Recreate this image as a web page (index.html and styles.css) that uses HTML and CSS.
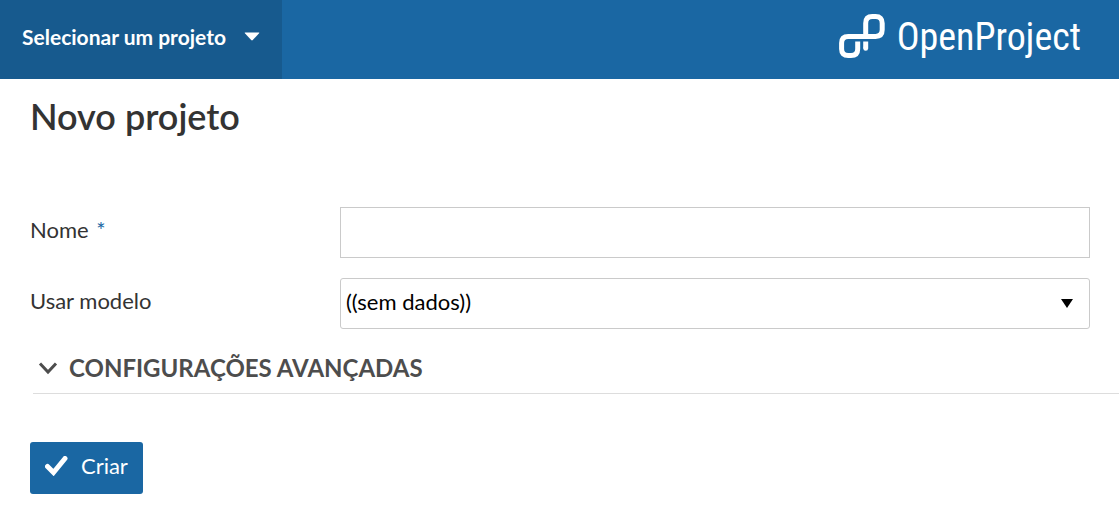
FILE: index.html
```html
<!DOCTYPE html>
<html lang="pt">
<head>
<meta charset="utf-8">
<meta name="viewport" content="width=device-width, initial-scale=1">
<title>Novo projeto - OpenProject</title>
<link rel="stylesheet" href="styles.css">
</head>
<body>
<header class="top-bar">
  <button class="project-menu" type="button">
    <span>Selecionar um projeto</span>
    <svg class="caret" viewBox="0 0 16 9" aria-hidden="true"><path d="M1.2 .5h13.6q1 0 .3.8L8.8 8q-.8.8-1.6 0L.9 1.3Q.2.5 1.2.5z"/></svg>
  </button>
  <a class="brand" href="#">
    <svg class="brand-mark" viewBox="0 0 46 45" aria-hidden="true">
      <path d="M18.7 27.5V35Q18.7 41.6 12 41.6H9.2Q2.6 41.6 2.6 35V29Q2.6 22.4 9.2 22.4H36.6Q43.2 22.4 43.2 15.8V9.2Q43.2 2.6 36.6 2.6H33.3Q26.7 2.6 26.7 9.2V22.4"/>
      <path d="M26.7 27.5V34.3" /><circle cx="26.7" cy="34.4" r="2.4"/>
    </svg>
    <span class="brand-name">OpenProject</span>
  </a>
</header>
<main class="content">
  <h1 class="title">Novo projeto</h1>
  <form class="form">
    <div class="field">
      <label class="label" for="name">Nome <span class="required">*</span></label>
      <input class="control" id="name" type="text" required>
    </div>
    <div class="field">
      <label class="label" for="template">Usar modelo</label>
      <div class="select-wrap">
        <select class="control select" id="template"><option>((sem dados))</option></select>
        <svg class="select-arrow" viewBox="0 0 12 9" aria-hidden="true"><path d="M0 0h12L6 9z"/></svg>
      </div>
    </div>
    <h2 class="section">
      <button class="section-toggle" type="button" aria-expanded="false">
        <svg class="chevron" viewBox="0 0 20 14" aria-hidden="true"><path d="M2 2.5l8 8.5 8-8.5"/></svg>
        <span>CONFIGURAÇÕES AVANÇADAS</span>
      </button>
    </h2>
    <button class="submit" type="submit">
      <svg class="check" viewBox="0 0 23 20" aria-hidden="true"><path d="M2.5 10.5l6 6L20 2.5"/></svg>
      <span>Criar</span>
    </button>
  </form>
</main>
</body>
</html>
```
FILE: styles.css
```css
* { box-sizing: border-box; }

body {
  margin: 0;
  background: #fff;
  color: #333;
  font: 22px/28px Lato, sans-serif;
}

button, input, select { font: inherit; }

.top-bar {
  display: flex;
  justify-content: space-between;
  height: 79px;
  background: #1a67a3;
}

.project-menu {
  display: flex;
  align-items: center;
  gap: 18px;
  padding: 0 22px 6px;
  border: 0;
  background: #175a8e;
  color: #fff;
  font-size: 21px;
  font-weight: 700;
}

.caret { width: 16px; height: 9px; fill: #fff; }

.brand {
  display: flex;
  align-items: center;
  gap: 12px;
  padding: 0 38px 6px 0;
  color: #fff;
  text-decoration: none;
}

.brand-mark { width: 46px; height: 45px; fill: none; stroke: #fff; stroke-width: 5; }
.brand-mark circle { fill: #fff; stroke: none; }

.brand-name {
  font: 38px/48px "Roboto Condensed", "Liberation Sans Narrow", sans-serif;
}

.content { padding: 15px 0 16px 30px; }

.title {
  margin: 0 0 69px;
  font-size: 36px;
  line-height: 44px;
  font-weight: 600;
}

.form { display: flex; flex-direction: column; }

.field {
  display: grid;
  grid-template-columns: 310px 1fr;
  align-items: center;
  margin: 0 29px 20px 0;
}

.label { padding-bottom: 5px; }
.required { margin-left: 2px; color: #1a67a3; }

.control {
  width: 100%;
  height: 51px;
  padding: 0 6px;
  border: 1px solid #cacaca;
  border-radius: 0;
  background: #fff;
  color: #000;
}

.select-wrap { position: relative; }

.select {
  display: block;
  padding: 0 40px 4px 5px;
  border-radius: 3px;
  appearance: none;
}

.select-arrow {
  position: absolute;
  top: 21px;
  right: 17px;
  width: 12px;
  height: 9px;
  pointer-events: none;
}

.section {
  margin: 0 0 48px 3px;
  border-bottom: 1px solid #ddd;
}

.section-toggle {
  display: flex;
  align-items: center;
  gap: 11px;
  padding: 3px 0 9px 5px;
  border: 0;
  background: none;
  color: #4d4d4d;
  font-size: 24px;
  line-height: 32px;
  font-weight: 700;
}

.chevron { width: 20px; height: 14px; fill: none; stroke: #4d4d4d; stroke-width: 3; }

.submit {
  display: flex;
  align-self: flex-start;
  align-items: center;
  gap: 13px;
  height: 52px;
  padding: 0 15px 4px;
  border: 0;
  border-radius: 3px;
  background: #1a67a3;
  color: #fff;
}

.check { width: 23px; height: 20px; fill: none; stroke: #fff; stroke-width: 5; stroke-linecap: round; }
```
